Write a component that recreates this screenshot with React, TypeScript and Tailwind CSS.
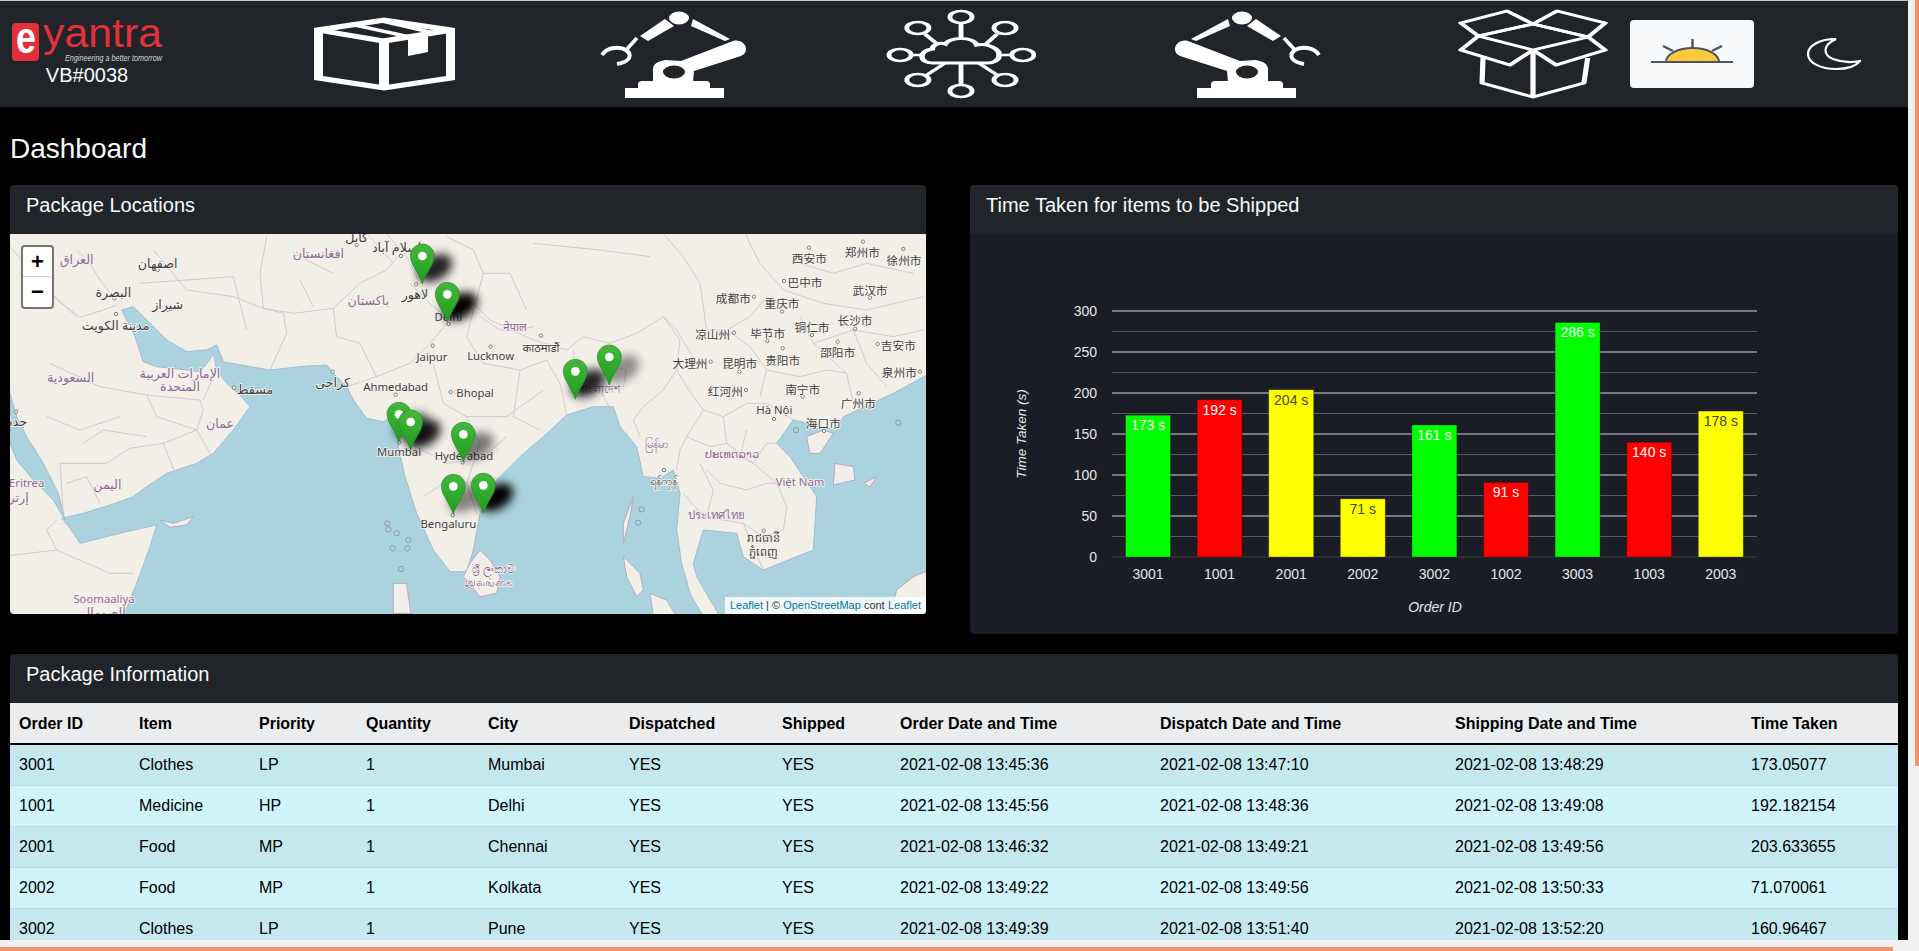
import React from "react";

const columns = [
  "Order ID",
  "Item",
  "Priority",
  "Quantity",
  "City",
  "Dispatched",
  "Shipped",
  "Order Date and Time",
  "Dispatch Date and Time",
  "Shipping Date and Time",
  "Time Taken",
];

const rows = [
  ["3001", "Clothes", "LP", "1", "Mumbai", "YES", "YES", "2021-02-08 13:45:36", "2021-02-08 13:47:10", "2021-02-08 13:48:29", "173.05077"],
  ["1001", "Medicine", "HP", "1", "Delhi", "YES", "YES", "2021-02-08 13:45:56", "2021-02-08 13:48:36", "2021-02-08 13:49:08", "192.182154"],
  ["2001", "Food", "MP", "1", "Chennai", "YES", "YES", "2021-02-08 13:46:32", "2021-02-08 13:49:21", "2021-02-08 13:49:56", "203.633655"],
  ["2002", "Food", "MP", "1", "Kolkata", "YES", "YES", "2021-02-08 13:49:22", "2021-02-08 13:49:56", "2021-02-08 13:50:33", "71.070061"],
  ["3002", "Clothes", "LP", "1", "Pune", "YES", "YES", "2021-02-08 13:49:39", "2021-02-08 13:51:40", "2021-02-08 13:52:20", "160.96467"],
];

const colWidths = [121, 120, 107, 122, 141, 153, 118, 260, 295, 296, 155];

const bars = [
  { id: "3001", value: 173, fill: "#00ff00", text: "#ffffff" },
  { id: "1001", value: 192, fill: "#ff0000", text: "#ffffff" },
  { id: "2001", value: 204, fill: "#ffff00", text: "#444444" },
  { id: "2002", value: 71, fill: "#ffff00", text: "#444444" },
  { id: "3002", value: 161, fill: "#00ff00", text: "#ffffff" },
  { id: "1002", value: 91, fill: "#ff0000", text: "#ffffff" },
  { id: "3003", value: 286, fill: "#00ff00", text: "#ffffff" },
  { id: "1003", value: 140, fill: "#ff0000", text: "#ffffff" },
  { id: "2003", value: 178, fill: "#ffff00", text: "#444444" },
];

// map labels: text, x, y, country label or not (coords are 3x the map's pixels)
const labels: [string, number, number, boolean?][] = [
  ["العراق", 230, 88, true],
  ["اصفهان", 473, 98],
  ["كابل", 1070, 20],
  ["افغانستان", 955, 68, true],
  ["إسلام آباد", 1190, 50],
  ["لاهور", 1245, 192],
  ["باكستان", 1105, 210, true],
  ["البصرة", 340, 185],
  ["شيراز", 503, 222],
  ["مدينة الكويت", 347, 285],
  ["Delhi", 1345, 258],
  ["Jaipur", 1296, 378],
  ["Lucknow", 1472, 375],
  ["Bhopal", 1425, 487],
  ["Ahmedabad", 1187, 470],
  ["كراجى", 998, 455],
  ["مسقط", 765, 476],
  ["عمان", 660, 580, true],
  ["الإمارات العربية", 540, 430, true],
  ["المتحدة", 540, 468, true],
  ["السعودية", 212, 442, true],
  ["Mumbai", 1197, 663],
  ["Hyderabad", 1392, 677],
  ["Bengaluru", 1345, 880],
  ["اليمن", 322, 762, true],
  ["Eritrea", 80, 757, true],
  ["إرتريا", 45, 800, true],
  ["Soomaaliya", 312, 1105, true],
  ["الصومال", 310, 1145, true],
  ["جدة", 50, 572],
  ["西安市", 2428, 85],
  ["郑州市", 2587, 67],
  ["徐州市", 2712, 90],
  ["巴中市", 2415, 156],
  ["武汉市", 2610, 180],
  ["成都市", 2200, 205],
  ["重庆市", 2346, 220],
  ["长沙市", 2565, 272],
  ["铜仁市", 2436, 291],
  ["毕节市", 2303, 310],
  ["凉山州", 2138, 314],
  ["邵阳市", 2513, 367],
  ["吉安市", 2695, 345],
  ["贵阳市", 2348, 390],
  ["昆明市", 2219, 400],
  ["大理州", 2070, 401],
  ["泉州市", 2698, 428],
  ["红河州", 2176, 484],
  ["南宁市", 2408, 478],
  ["广州市", 2575, 521],
  ["Hà Nội", 2323, 538],
  ["海口市", 2470, 579],
  ["नेपाल", 1545, 288, true],
  ["काठमाडौं", 1623, 352],
  ["বাংলাদেশ", 1800, 475, true],
  ["မြန်မာ", 1970, 640, true],
  ["ရန်ကုန်", 1990, 752],
  ["ประเทศไทย", 2148, 852, true],
  ["ປະເທດລາວ", 2196, 670, true],
  ["Việt Nam", 2400, 755, true],
  ["រាជធានី", 2290, 922],
  ["ភ្នំពេញ", 2290, 965],
  ["ශ්‍රී ලංකාව", 1480, 1015, true],
  ["இலங்கை", 1465, 1055, true],
];

const labelSize = (text: string) => {
  if (/[\u0600-\u06ff]/.test(text)) return 38;
  if (/[\u4e00-\u9fff]/.test(text)) return 35;
  return 34;
};

const sea =
  "M370 1160 L410 1060 450 950 470 885 380 905 300 925 240 940 200 880 185 865 250 850 330 825 400 800 440 770 500 730 590 700 640 670 700 600 750 530 720 495 680 460 650 420 640 370 625 395 600 425 560 420 520 415 470 410 430 395 405 320 365 240 400 230 440 270 500 330 560 365 620 360 650 345 670 395 750 410 810 420 900 410 980 405 1010 440 1040 470 1060 510 1100 565 1150 575 1195 545 1195 650 1215 740 1250 850 1300 960 1350 1025 1400 1025 1420 960 1440 850 1490 750 1560 680 1630 620 1700 555 1780 530 1840 530 1860 590 1910 650 1930 740 1980 745 2020 720 2040 790 2030 900 2045 1000 2070 1090 2110 1160 2160 1160 2090 1040 2080 1000 2110 900 2210 910 2230 980 2290 1020 2440 960 2450 800 2370 680 2330 640 2380 570 2510 600 2530 560 2680 490 2790 430 2790 1160 Z";

const redSea = "M30 490 L50 560 80 620 130 700 175 790 195 870 160 810 100 750 50 690 30 640 Z";

const islands = [
  "M1440 960 L1410 1000 1390 1040 1440 1100 1490 1090 1500 1040 1470 990 Z",
  "M1900 800 L1870 880 1870 940 1890 860 Z",
  "M1870 980 L1920 1030 1930 1080 1910 1100 1880 1040 Z",
  "M2420 620 L2470 600 2500 610 2460 670 2430 670 Z",
  "M480 870 L520 880 580 860 560 885 510 892 Z",
  "M1950 1090 L2000 1110 2030 1160 1960 1160 Z",
  "M2670 1160 L2690 1080 2740 1040 2790 1020 2790 1160 Z",
  "M1180 1060 L1220 1060 1232 1150 1180 1150 Z",
  "M2505 700 L2560 710 2565 750 2500 765 Z",
  "M2590 760 L2630 740 2610 770 Z",
];

const borders = [
  "M30 50 L160 200 240 262 310 240 350 225",
  "M230 60 L270 100 300 150 340 200",
  "M60 130 L130 210 160 195 230 262",
  "M150 400 L300 470 440 495 600 510 610 540 590 600 490 640 390 655 320 700 180 700",
  "M590 600 L635 680",
  "M490 640 L525 730",
  "M610 510 L640 440 650 420",
  "M790 235 L850 250 860 310 810 420",
  "M790 235 L780 130 800 20",
  "M790 235 L880 250 1000 235 1080 160 1160 120 1210 60",
  "M1000 235 L1010 320 1080 340 1130 440 1040 470",
  "M1230 160 L1300 230 1350 270 1290 340 1230 400 1130 440",
  "M1400 200 L1470 270 1600 330 1700 360 1750 320 1830 340 1910 310 1990 260 2030 300 2090 400",
  "M1720 360 L1730 500 1800 480 1860 590",
  "M1800 480 L1870 470 1880 420 1840 410",
  "M1990 260 L2040 330 2030 420 2060 470 2110 540 2170 560 2240 520 2300 520 2380 570",
  "M2030 420 L1990 480 1930 530 1900 570 1920 620",
  "M2110 540 L2060 620 2040 660 2030 720",
  "M2170 560 L2180 640 2260 700 2330 760 2360 830 2350 900 2290 920 2230 880 2110 860 2050 790",
  "M2060 620 L2130 650 2180 640",
  "M2260 700 L2300 640 2330 640",
  "M2230 880 L2290 1020",
  "M180 700 L190 850",
  "M170 870 L140 900 170 960 330 1030 400 1030",
  "M190 880 L380 905",
  "M0 980 L170 960",
  "M1440 260 L1500 300 1560 300 1600 290",
  "M1150 0 L1220 80 1260 160",
  "M1980 0 L2050 80 2100 160 2120 300",
  "M2230 0 L2280 100 2350 180 2470 220 2600 240 2770 200",
  "M1340 20 L1420 60 1450 130 1530 130 1580 240",
  "M1600 40 L1800 60 1950 80",
  "M2400 260 L2440 340 2540 430 2560 520",
  "M880 70 L1000 130",
  "M460 60 L560 180 700 200",
  "M420 160 L700 140 740 300",
  "M1300 400 L1330 520 1400 560 1520 560 1630 480",
  "M1230 640 L1340 700 1450 680 1520 620",
  "M1270 800 L1360 740 1400 760",
  "M2180 300 L2250 350 2300 420 2280 500",
  "M2120 300 L2180 300 2250 260 2300 200",
  "M2300 420 L2400 440 2480 420 2540 430",
  "M2440 340 L2560 300 2680 320 2770 300",
  "M2560 300 L2600 400 2660 470",
  "M2400 100 L2500 130 2600 100 2740 130",
  "M1450 130 L1400 320 1450 400 1560 420 1640 390",
  "M1560 420 L1540 560 1620 600",
  "M1400 560 L1440 640 1400 760 1430 850",
  "M1100 10 L1180 100",
  "M2120 720 L2160 760 2240 780 2300 760 2330 760",
  "M2120 860 L2140 780 2100 700",
  "M2240 600 L2220 680 2260 700",
  "M1640 390 L1680 460 1700 555",
  "M900 150 L940 230",
  "M700 200 L790 235",
  "M140 560 L240 600 360 560",
  "M250 640 L310 600 440 620",
  "M440 495 L470 560 590 600",
  "M200 760 L260 740 300 820",
];

const coastRings = [
  [1162, 880],
  [1165, 898],
  [1190, 910],
  [1225, 930],
  [1222, 955],
  [1178, 955],
  [1203, 1017],
  [1925, 838],
  [1914, 878],
  [2695, 578],
  [2388, 600],
];

const cityDots = [
  [1203, 78], [1070, 45], [348, 252], [343, 205], [473, 120], [505, 240], [1298, 347], [1352, 486],
  [1187, 494], [998, 425], [702, 473], [1197, 637], [1388, 697], [1358, 855], [1346, 282], [1248, 163],
  [48, 545], [2427, 53], [2589, 35], [2710, 57], [2352, 153], [2610, 203], [2262, 200], [2346, 245],
  [2565, 296], [2436, 315], [2302, 333], [2202, 308], [2513, 335], [2633, 342], [2348, 355], [2218, 425],
  [2132, 395], [2760, 425], [2238, 480], [2408, 500], [2576, 490], [2322, 567], [2472, 603], [1623, 317],
  [1472, 350], [1992, 720], [2291, 902],
];

const Pin = ({ x, y }: { x: number; y: number }) => (
  <g transform={`translate(${x} ${y})`}>
    <path
      d="M0 120 C-8 90 -36 62 -36 36 C-36 16 -20 0 0 0 C20 0 36 16 36 36 C36 62 8 90 0 120 Z"
      fill="url(#pinFill)"
      stroke="#2a8a2a"
      strokeWidth="2"
    />
    <circle cx="0" cy="36" r="13" fill="#ffffff" />
  </g>
);

// x, y of each pin's top and how dark its shadow is
const pins = [
  [1267, 42, 0.85],
  [1342, 157, 1],
  [1197, 517, 0.6],
  [1232, 540, 0.9],
  [1390, 577, 0.5],
  [1360, 733, 0.45],
  [1450, 730, 1],
  [1726, 388, 0.85],
  [1828, 345, 0.4],
];

const MapView = () => (
  <div className="relative h-[380px] overflow-hidden bg-[#f2efe9]">
    <svg viewBox="30 12 2748 1140" className="block h-[380px] w-[916px]">
      <defs>
        <linearGradient id="pinFill" x1="0" y1="0" x2="0" y2="1">
          <stop offset="0" stopColor="#46b83c" />
          <stop offset="1" stopColor="#1d9c1d" />
        </linearGradient>
        <filter id="pinShadow" x="-80%" y="-80%" width="260%" height="260%">
          <feGaussianBlur stdDeviation="15" />
        </filter>
      </defs>
      <path d={sea} fill="#aad3df" stroke="#a4bccb" strokeWidth="3" />
      <path d={redSea} fill="#aad3df" stroke="#a4bccb" strokeWidth="3" />
      {islands.map((d) => (
        <path key={d} d={d} fill="#f2efe9" stroke="#b7a9c4" strokeWidth="3" />
      ))}
      {borders.map((d) => (
        <path key={d} d={d} fill="none" stroke="#cdbfd2" strokeWidth="2.5" />
      ))}
      {coastRings.map(([x, y]) => (
        <circle key={`r${x}`} cx={x} cy={y} r="8" fill="#aad3df" stroke="#9a97ac" strokeWidth="3" />
      ))}
      {cityDots.map(([x, y]) => (
        <circle key={`c${x}`} cx={x} cy={y} r="5" fill="#ffffff" stroke="#666666" strokeWidth="2.5" />
      ))}
      {labels.map(([text, x, y, country]) => (
        <text
          key={text + x}
          x={x}
          y={y}
          textAnchor="middle"
          dominantBaseline="central"
          fontSize={labelSize(text)}
          fontFamily="'Noto Sans','Noto Sans CJK SC','DejaVu Sans',sans-serif"
          fill={country ? "#8d6a97" : "#3f3f3f"}
          stroke="#f6f3ee"
          strokeWidth="5"
          paintOrder="stroke"
        >
          {text}
        </text>
      ))}
      {pins.map(([x, y, dark]) => (
        <ellipse
          key={`s${x}`}
          cx={x + 38}
          cy={y + 72}
          rx="56"
          ry="36"
          transform={`rotate(-30 ${x + 38} ${y + 72})`}
          fill="#000000"
          opacity={dark}
          filter="url(#pinShadow)"
        />
      ))}
      {pins.map(([x, y]) => (
        <Pin key={x} x={x} y={y} />
      ))}
    </svg>

    <div className="absolute left-[11px] top-[11px] w-[33px] rounded border-2 border-[#3a3a3a]/70 bg-white text-black">
      <div className="flex h-[30px] items-center justify-center border-b border-[#cccccc] text-[22px] font-bold leading-none">+</div>
      <div className="flex h-[30px] items-center justify-center text-[22px] font-bold leading-none">−</div>
    </div>

    <div className="absolute bottom-0 right-0 h-[17px] w-[201px] overflow-hidden whitespace-nowrap bg-white/85 pl-[5px] text-[11px] leading-[17px] text-[#333333]">
      <span className="text-[#0078a8]">Leaflet</span> | © <span className="text-[#0078a8]">OpenStreetMap</span> cont
      <span className="absolute right-[5px] top-0 text-[#0078a8]">Leaflet</span>
    </div>
  </div>
);

const Chart = () => {
  const y0 = 323;
  const scale = 0.82;
  return (
    <svg viewBox="0 0 928 400" className="block h-[400px] w-[928px]" fontFamily="'Liberation Sans',sans-serif">
      {[25, 75, 125, 175, 225, 275].map((v) => (
        <line key={v} x1="142" x2="787" y1={y0 - v * scale} y2={y0 - v * scale} stroke="#5a5c62" />
      ))}
      {[50, 100, 150, 200, 250, 300].map((v) => (
        <line key={v} x1="142" x2="787" y1={y0 - v * scale} y2={y0 - v * scale} stroke="#d4d4d4" />
      ))}
      <line x1="142" x2="787" y1={y0} y2={y0} stroke="#3c3e44" />
      {[0, 50, 100, 150, 200, 250, 300].map((v) => (
        <text key={v} x="127" y={y0 - v * scale} textAnchor="end" dominantBaseline="central" fontSize="14" fill="#e6e6e6">
          {v}
        </text>
      ))}
      {bars.map((b, i) => {
        const cx = 178 + i * 71.6;
        const top = y0 - b.value * scale;
        return (
          <g key={b.id}>
            <rect x={cx - 22.5} y={top} width="45" height={y0 - top} fill={b.fill} stroke="#000000" strokeOpacity="0.3" />
            <text x={cx} y={top + 10} textAnchor="middle" dominantBaseline="central" fontSize="14" fill={b.text}>
              {b.value} s
            </text>
            <text x={cx} y="340" textAnchor="middle" dominantBaseline="central" fontSize="14" fill="#e6e6e6">
              {b.id}
            </text>
          </g>
        );
      })}
      <text x="465" y="373" textAnchor="middle" dominantBaseline="central" fontSize="14" fontStyle="italic" fill="#e6e6e6">
        Order ID
      </text>
      <text
        x="51"
        y="200"
        textAnchor="middle"
        dominantBaseline="central"
        fontSize="13.5"
        fontStyle="italic"
        fill="#e6e6e6"
        transform="rotate(-90 51 200)"
      >
        Time Taken (s)
      </text>
    </svg>
  );
};

const Logo = () => (
  <svg width="150" height="42" viewBox="0 0 150 42" className="block overflow-visible">
    <rect x="0" y="1" width="27" height="38" rx="4" fill="#e2313a" />
    <text
      x="4"
      y="31"
      textLength="20"
      lengthAdjust="spacingAndGlyphs"
      fontSize="44"
      fontWeight="700"
      fontFamily="'Liberation Sans',sans-serif"
      fill="#ffffff"
    >
      e
    </text>
    <text
      x="31"
      y="25"
      textLength="119"
      lengthAdjust="spacingAndGlyphs"
      fontSize="41"
      fontFamily="'Liberation Sans',sans-serif"
      fill="#e2313a"
    >
      yantra
    </text>
    <text
      x="53"
      y="39"
      textLength="97"
      lengthAdjust="spacingAndGlyphs"
      fontSize="9"
      fontStyle="italic"
      fontFamily="'Liberation Sans',sans-serif"
      fill="#d8d8d8"
    >
      Engineering a better tomorrow
    </text>
  </svg>
);

const BoxIcon = () => (
  <svg width="141" height="74" viewBox="0 0 70.5 74" preserveAspectRatio="none" className="block" fill="none" stroke="#ffffff" strokeWidth="5">
    <path d="M2 13 L35 3 L68.5 13 V61 L35 71 L2 61 Z" />
    <path d="M2 13 L35 24 L68.5 13 M35 24 V71" />
    <path d="M18 7 L48 20 M34 4 L60 16" strokeWidth="3.5" />
    <path d="M47 22 L57 19 V35 L47 39 Z" fill="#ffffff" stroke="none" />
  </svg>
);

const RobotIcon = ({ flip }: { flip?: boolean }) => (
  <svg width="147" height="87" viewBox="0 0 147 87" className={flip ? "block -scale-x-100" : "block"} fill="#ffffff">
    <rect x="25" y="77" width="99" height="10" />
    <path d="M38 77 V73 C38 71 40 70 42 70 H106 C108 70 110 71 110 73 V77 Z" />
    <path d="M53 71 V58 C53 53 58 50 66 49 L81 50 L133 30 C140 28 146 33 146 38 C146 42 143 44 141 45 L94 60 L93 71 Z" />
    <ellipse cx="74" cy="61" rx="11" ry="6.5" fill="#212529" />
    <path d="M93 8 L130 28 L125 30 L91 15 Z" />
    <ellipse cx="79" cy="7" rx="10" ry="6.5" />
    <path d="M65 8 L74 15 L48 30 L40 25 Z" />
    <path d="M37 27 L27 38" stroke="#ffffff" strokeWidth="3.5" />
    <path d="M2 44 C7 36 20 35 26 39 C33 44 30 51 17 53" fill="none" stroke="#ffffff" strokeWidth="4" />
  </svg>
);

const NetworkIcon = () => (
  <svg width="150" height="90" viewBox="0 0 81 90" preserveAspectRatio="none" className="block" fill="none" stroke="#ffffff" strokeWidth="2.6">
    <path d="M25 54 C18 54 17 42 25 40 C25 36 29 33 32 35 C34 28 47 27 49 36 C55 34 62 40 61 47 C61 51 58 54 55 54 Z" strokeWidth="3" />
    <circle cx="40.5" cy="8" r="6" />
    <circle cx="40.5" cy="82" r="6" />
    <circle cx="7.6" cy="46" r="6" />
    <circle cx="73.9" cy="46" r="6" />
    <circle cx="17.2" cy="19" r="6" />
    <circle cx="64.3" cy="19" r="6" />
    <circle cx="17.2" cy="71" r="6" />
    <circle cx="64.3" cy="71" r="6" />
    <path d="M40.5 14 V29 M40.5 54 V76 M14 46 H19 M62 46 H68 M21 25 L27 34 M60 25 L54 35 M22 66 L32 54 M60 66 L50 54" />
  </svg>
);

const OpenBoxIcon = () => (
  <svg width="150" height="90" viewBox="0 0 81 90" preserveAspectRatio="none" className="block" fill="none" stroke="#ffffff" strokeWidth="2.8" strokeLinejoin="round">
    <path d="M40.5 15 L26.5 2 L1.5 14 L11 27 Z" />
    <path d="M40.5 15 L53.5 2 L79.5 14 L70.3 28 Z" />
    <path d="M40.5 15 L70.3 28 L40.5 41 L11 27 Z" />
    <path d="M11 27 L1.5 41 L28 56 L40.5 41" />
    <path d="M70.3 28 L79.5 41 L53 56 L40.5 41" />
    <path d="M13.5 49 L13 74 L40.5 88 L68 74 L70 49 M40.5 41 V88" />
  </svg>
);

const SunIcon = () => (
  <svg width="82" height="25" viewBox="0 0 82 25" className="block">
    <path d="M15 23 A26.5 14 0 0 1 68 23 Z" fill="#ffc93c" stroke="#4b5563" strokeWidth="2" />
    <path d="M0 23 H82" stroke="#4b5563" strokeWidth="2" />
    <path d="M41.5 0 V8 M12 7 L22 12 M71 7 L61 12" stroke="#4b5563" strokeWidth="2.5" />
  </svg>
);

const MoonIcon = () => (
  <svg width="54" height="33" viewBox="0 0 54 33" className="block" fill="none" stroke="#ffffff" strokeWidth="2.2">
    <path d="M29 1 C12 1 1 8 1 16 C1 25 14 31 29 31 C40 31 49 28 53 23 C44 25 34 24 26 21 C17 17 14 8 29 1 Z" />
  </svg>
);

export default function App() {
  return (
    <div className="flex h-[951px] w-[1919px] flex-col overflow-hidden bg-[#f1f1f1] [font-family:'Liberation_Sans',sans-serif]">
      <div className="flex h-[940px]">
        <div className="h-[940px] w-[1908px] overflow-hidden bg-black text-[#f8f9fa]">
          <nav className="flex h-[107px] items-center border-t border-[#c8c8c8] bg-[#212529]">
            <div className="ml-[12px] flex w-[150px] flex-col items-center">
              <Logo />
              <div className="-mt-[1px] text-[20px] leading-[24px]">VB#0038</div>
            </div>
            <div className="ml-[152px]">
              <BoxIcon />
            </div>
            <div className="ml-[145px]">
              <RobotIcon />
            </div>
            <div className="ml-[139px]">
              <NetworkIcon />
            </div>
            <div className="ml-[138px]">
              <RobotIcon flip />
            </div>
            <div className="ml-[137px]">
              <OpenBoxIcon />
            </div>
            <button className="ml-[22px] flex h-[68px] w-[124px] items-center justify-center rounded bg-[#f8f9fa] pb-[6px]">
              <SunIcon />
            </button>
            <div className="ml-[53px]">
              <MoonIcon />
            </div>
          </nav>

          <main className="px-[10px]">
            <h1 className="mb-[19px] mt-[25px] text-[28px] leading-[34px]">Dashboard</h1>

            <div className="flex items-start gap-[44px]">
              <section className="w-[916px] overflow-hidden rounded">
                <h2 className="h-[49px] bg-[#212529] px-[16px] text-[20px] leading-[40px]">Package Locations</h2>
                <MapView />
              </section>
              <section className="w-[928px] overflow-hidden rounded bg-[#1a1d26]">
                <h2 className="h-[49px] bg-[#212529] px-[16px] text-[20px] leading-[40px]">Time Taken for items to be Shipped</h2>
                <Chart />
              </section>
            </div>

            <section className="mt-[20px] w-[1888px] overflow-hidden rounded">
              <h2 className="h-[49px] bg-[#212529] px-[16px] text-[20px] leading-[40px]">Package Information</h2>
              <table className="w-[1888px] table-fixed border-collapse text-left text-[16px] leading-[24px] text-black">
                <colgroup>
                  {colWidths.map((w, i) => (
                    <col key={i} style={{ width: w }} />
                  ))}
                </colgroup>
                <thead>
                  <tr className="border-b-2 border-black bg-[#ebeced]">
                    {columns.map((c) => (
                      <th key={c} className="px-2 pb-[7px] pt-[9px] font-bold first:pl-[9px]">
                        {c}
                      </th>
                    ))}
                  </tr>
                </thead>
                <tbody>
                  {rows.map((row, i) => (
                    <tr key={row[0]} className={i % 2 === 0 ? "border-b border-[#badce3] bg-[#c5e8ef]" : "border-b border-[#badce3] bg-[#cff4fc]"}>
                      {row.map((cell, j) => (
                        <td key={j} className="p-2 first:pl-[9px]">
                          {cell}
                        </td>
                      ))}
                    </tr>
                  ))}
                </tbody>
              </table>
            </section>
          </main>
        </div>

        <div className="flex h-[940px] w-[11px] justify-end">
          <div className="h-[766px] w-[4px] bg-[#f4906a]" />
        </div>
      </div>

      <div className="flex h-[11px] items-end">
        <div className="h-[4px] w-[1893px] bg-[#f4906a]" />
      </div>
    </div>
  );
}
